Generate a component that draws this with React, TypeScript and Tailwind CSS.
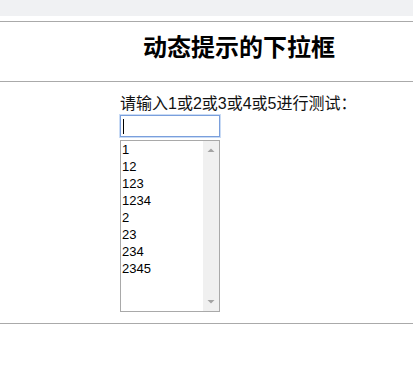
const options = ["1", "12", "123", "1234", "2", "23", "234", "2345"]

export default function App() {
  return (
    <div className="min-h-[374px] bg-white text-black font-['Liberation_Sans','Noto_Sans_CJK_SC',sans-serif]">
      {/* browser-ish top strip */}
      <div className="h-[16px] bg-[#f0f1f3]" />
      <div className="h-[5px]" />
      <div className="border-t border-[#aaaaaa]" />

      {/* Title */}
      <div className="h-[59px] pt-[14px] pl-[143px]">
        <h1 className="text-[24px] leading-[24px] font-bold tracking-normal">动态提示的下拉框</h1>
      </div>
      <div className="border-t border-[#aaaaaa]" />

      {/* Body */}
      <div className="pl-[120px] pt-[14px] pb-[11px]">
        <div className="text-[16px] leading-[16px] text-[#111]">请输入1或2或3或4或5进行测试：</div>
        <div className="mt-[3px] h-[22px] w-[100px] border border-[#7a9fdc] shadow-[0_0_0_1px_#c9dbf5] flex items-center pl-[2px]">
          <div className="h-[15px] w-px bg-black" />
        </div>
        <div className="mt-[3px] flex h-[172px] w-[100px] border border-[#a9a9a9]">
          <ul className="flex-1 pl-[1px] text-[13px] leading-[17px]">
            {options.map((o) => (
              <li key={o}>{o}</li>
            ))}
          </ul>
          <div className="flex w-[16px] flex-col justify-between bg-[#f0f0f0] py-[6px]">
            <svg width="16" height="5" viewBox="0 0 16 5">
              <path d="M4.5 5 L8 1.5 L11.5 5 Z" fill="#a3a3a3" />
            </svg>
            <svg width="16" height="5" viewBox="0 0 16 5">
              <path d="M4.5 0 L8 3.5 L11.5 0 Z" fill="#a3a3a3" />
            </svg>
          </div>
        </div>
      </div>
      <div className="border-t border-[#aaaaaa]" />
    </div>
  )
}
